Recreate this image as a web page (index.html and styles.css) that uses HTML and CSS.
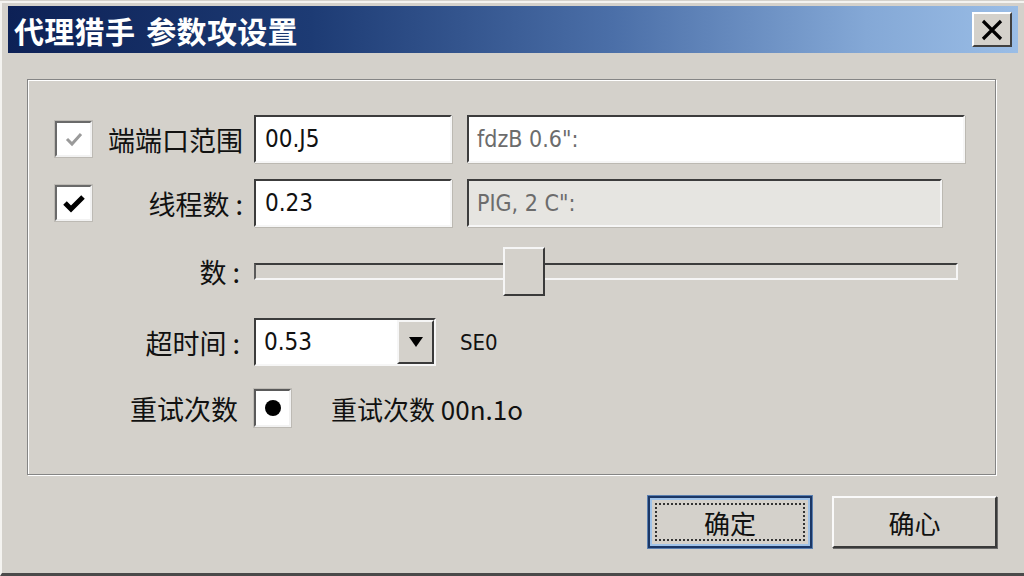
FILE: index.html
```html
<!DOCTYPE html>
<html lang="zh-CN">
<head>
    <meta charset="UTF-8">
    <title>代理猎手 参数攻设置</title>
    <link rel="stylesheet" href="styles.css">
</head>
<body>

<div class="window">
    <div class="titlebar">
        <span class="title">代理猎手 参数攻设置</span>
        <button class="close-btn" type="button">
            <svg width="24" height="22" viewBox="0 0 24 22">
                <path d="M3 2 L21 20 M21 2 L3 20" stroke="#000" stroke-width="3.2" fill="none"/>
            </svg>
        </button>
    </div>

    <div class="groupbox">
        <!-- 端口范围 -->
        <div class="row row-port">
            <div class="check-cell">
                <span class="checkbox">
                    <svg width="22" height="18" viewBox="0 0 22 18">
                        <path d="M4 9 L9 14 L18 4" stroke="#9a9a9a" stroke-width="3" fill="none"/>
                    </svg>
                </span>
            </div>
            <label class="label">端端口范围</label>
            <div class="field field-short">00.J5</div>
            <div class="field field-hint field-wide">fdzB 0.6":</div>
        </div>

        <!-- 线程数 -->
        <div class="row row-threads">
            <div class="check-cell">
                <span class="checkbox">
                    <svg width="24" height="20" viewBox="0 0 24 20">
                        <path d="M3 10 L9 16 L21 4" stroke="#000" stroke-width="5" fill="none"/>
                    </svg>
                </span>
            </div>
            <label class="label">线程数 :</label>
            <div class="field field-short">0.23</div>
            <div class="field field-hint field-disabled">PIG, 2 C":</div>
        </div>

        <!-- 数 滑块 -->
        <div class="row row-slider">
            <div class="check-cell"></div>
            <label class="label label-inset">数 :</label>
            <div class="slider">
                <div class="slider-track"></div>
                <div class="slider-thumb"></div>
            </div>
        </div>

        <!-- 超时间 -->
        <div class="row row-timeout">
            <div class="check-cell"></div>
            <label class="label label-inset">超时间 :</label>
            <div class="combo">
                <span class="combo-value">0.53</span>
                <span class="combo-btn">
                    <svg width="16" height="12" viewBox="0 0 16 12">
                        <path d="M1 1 L15 1 L8 11 Z" fill="#000"/>
                    </svg>
                </span>
            </div>
            <span class="unit">SE0</span>
        </div>

        <!-- 重试次数 -->
        <div class="row row-retry">
            <div class="check-cell"></div>
            <label class="label label-inset2">重试次数</label>
            <span class="radio"><span class="dot"></span></span>
            <span class="retry-text">重试次数 00n.1o</span>
        </div>
    </div>

    <div class="buttons">
        <button type="button" class="btn btn-default"><span class="focus">确定</span></button>
        <button type="button" class="btn">确心</button>
    </div>
</div>

</body>
</html>
```

FILE: styles.css
```css
body {
    margin: 0;
    padding: 0;
    background-color: #d4d1cb;
    font-family: "Noto Sans CJK SC", "DejaVu Sans", sans-serif;
    overflow: hidden;
}
.window {
    width: 1024px;
    height: 575px;
    box-sizing: border-box;
    padding: 7px 6px 0 8px;
    background-color: #d4d1cb;
    border-top: 2px solid #f4f3f0;
    border-left: 2px solid #f4f3f0;
    border-bottom: 3px solid #4a4a4a;
    display: flex;
    flex-direction: column;
    margin-top: 1px;
}
.window > .titlebar {
    margin-top: -4px;
    margin-left: -2px;
}
.titlebar {
    height: 47px;
    display: flex;
    align-items: center;
    justify-content: space-between;
    background: linear-gradient(to right, #0d2156 0%, #1d3b74 30%, #4b6fa8 60%, #84a8d6 85%, #9abde6 100%);
}
.title {
    color: #fff;
    font-weight: bold;
    font-size: 30px;
    padding-left: 6px;
    letter-spacing: 0.3px;
    word-spacing: 4px;
}
.close-btn {
    width: 40px;
    height: 35px;
    margin-right: 6px;
    padding: 0;
    background-color: #d4d1cb;
    border: 2px solid;
    border-color: #ffffff #404040 #404040 #ffffff;
    display: flex;
    align-items: center;
    justify-content: center;
}

/* 分组框 */
.groupbox {
    margin: 26px 22px 0 17px;
    height: 396px;
    box-sizing: border-box;
    border: 1px solid #858585;
    box-shadow: 1px 1px 0 #fff, inset 1px 1px 0 #fff;
    padding: 35px 0 0 27px;
}
.row {
    display: flex;
    align-items: center;
    height: 48px;
}
.row-threads { margin-top: 16px; }
.row-slider { margin-top: 20px; height: 49px; }
.row-timeout { margin-top: 22px; }
.row-retry { margin-top: 18px; }

.check-cell {
    width: 38px;
    flex: none;
}
.checkbox {
    width: 37px;
    height: 36px;
    box-sizing: border-box;
    background-color: #fff;
    border: 2px solid;
    border-color: #6a6a6a #f2f2f2 #f2f2f2 #6a6a6a;
    box-shadow: 0 0 0 1px #bdbab4;
    display: flex;
    align-items: center;
    justify-content: center;
}
.label {
    width: 150px;
    flex: none;
    text-align: right;
    font-size: 27px;
    color: #111;
    margin-right: 11px;
    line-height: 1;
    white-space: nowrap;
}
.label-inset {
    width: 147px;
    margin-right: 14px;
}
.label-inset2 {
    width: 145px;
    margin-right: 16px;
}
.field {
    height: 48px;
    box-sizing: border-box;
    background-color: #fff;
    border: 2px solid;
    border-color: #3c3c3c #f6f6f6 #f6f6f6 #3c3c3c;
    box-shadow: 1px 1px 0 #bcb9b2;
    padding-left: 9px;
    display: flex;
    align-items: center;
    font-family: "DejaVu Sans Condensed", "DejaVu Sans", sans-serif;
    font-size: 24px;
    color: #111;
}
.field-short {
    width: 198px;
}
.field-wide {
    width: 498px;
    margin-left: 15px;
}
.field-disabled {
    width: 475px;
    margin-left: 15px;
    background-color: #e6e5e1;
}
.field-hint {
    color: #6c6c6c;
    font-size: 23px;
    padding-left: 8px;
}

/* 滑块 */
.slider {
    position: relative;
    width: 704px;
    height: 49px;
    display: flex;
    align-items: center;
}
.slider-track {
    width: 100%;
    height: 17px;
    box-sizing: border-box;
    border: 2px solid;
    border-color: #3c3c3c #f6f6f6 #f6f6f6 #5a5a5a;
}
.slider-thumb {
    position: absolute;
    left: 249px;
    top: 0;
    width: 42px;
    height: 49px;
    box-sizing: border-box;
    background-color: #d4d1cb;
    border: 2px solid;
    border-color: #f6f6f6 #3a3a3a #3a3a3a #f6f6f6;
}

/* 下拉框 */
.combo {
    width: 182px;
    height: 48px;
    box-sizing: border-box;
    background-color: #fff;
    border: 2px solid;
    border-color: #3c3c3c #f6f6f6 #f6f6f6 #3c3c3c;
    display: flex;
    align-items: center;
    justify-content: space-between;
}
.combo-value {
    padding-left: 8px;
    font-family: "DejaVu Sans Condensed", "DejaVu Sans", sans-serif;
    font-size: 24px;
    color: #111;
}
.combo-btn {
    width: 37px;
    height: 44px;
    box-sizing: border-box;
    background-color: #d4d1cb;
    border: 2px solid;
    border-color: #f6f6f6 #3a3a3a #3a3a3a #f6f6f6;
    display: flex;
    align-items: center;
    justify-content: center;
}
.unit {
    margin-left: 24px;
    font-family: "DejaVu Sans Condensed", "DejaVu Sans", sans-serif;
    font-size: 22px;
    color: #111;
}

/* 单选 */
.radio {
    width: 37px;
    height: 38px;
    box-sizing: border-box;
    background-color: #fff;
    border: 2px solid;
    border-color: #5a5a5a #f2f2f2 #f2f2f2 #5a5a5a;
    box-shadow: 0 0 0 1px #bdbab4;
    display: flex;
    align-items: center;
    justify-content: center;
}
.dot {
    width: 16px;
    height: 16px;
    border-radius: 50%;
    background-color: #000;
}
.retry-text {
    margin-left: 40px;
    font-size: 26px;
    color: #111;
}

/* 底部按钮 */
.buttons {
    display: flex;
    justify-content: flex-end;
    gap: 20px;
    margin: 21px 21px 0 0;
}
.btn {
    width: 165px;
    height: 52px;
    padding: 0;
    font-family: "Noto Sans CJK SC", sans-serif;
    font-size: 26px;
    color: #111;
    background-color: #d4d1cb;
    border: 2px solid;
    border-color: #fafafa #3a3a3a #3a3a3a #fafafa;
    box-shadow: 1px 1px 0 #6a6a6a;
}
.btn-default {
    width: 164px;
    border: 2px solid #1b3766;
    box-shadow: inset 0 0 0 2px #9fc3ea, 0 0 0 1px #5a7fb0;
    display: flex;
    align-items: stretch;
    padding: 5px;
}
.focus {
    flex: 1;
    border: 2px dotted #333;
    display: flex;
    align-items: center;
    justify-content: center;
}
```
